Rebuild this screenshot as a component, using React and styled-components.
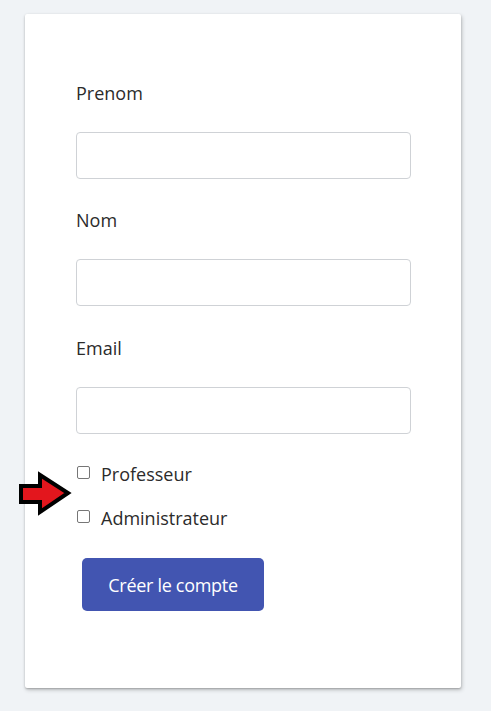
import React from "react";
import styled, { createGlobalStyle } from "styled-components";

const Global = createGlobalStyle`
  html, body { margin: 0; padding: 0; background: #f0f3f6; }
  body { font-family: "Open Sans", "Noto Sans", sans-serif; color: #2b2b2b; }
`;

const Page = styled.div`
  position: relative;
  padding: 14px 0 0 25px;
  min-height: 711px;
  box-sizing: border-box;
`;

const Card = styled.form`
  width: 436px;
  height: 674px;
  box-sizing: border-box;
  background: #fff;
  border-radius: 2px;
  box-shadow: 0 1px 2px rgba(0, 0, 0, 0.22), 1px 2px 4px rgba(0, 0, 0, 0.2);
  padding: 67px 50px 0 51px;
  display: flex;
  flex-direction: column;
`;

const Label = styled.label`
  display: block;
  font-size: 18px;
  line-height: 24px;
  margin-top: ${(p) => p.$top || 0}px;
  margin-bottom: 27px;
  color: #2b2b2b;
`;

const Input = styled.input`
  display: block;
  width: 335px;
  height: 47px;
  box-sizing: border-box;
  border: 1px solid #cfd2d6;
  border-radius: 4px;
  background: #fff;
  margin: 0;
`;

const CheckRow = styled.label`
  display: flex;
  align-items: center;
  height: 24px;
  font-size: 18px;
  margin-top: ${(p) => p.$top}px;
  color: #2b2b2b;
`;

const Box = styled.span`
  width: 11px;
  height: 11px;
  border: 1px solid #767676;
  border-radius: 2px;
  margin: -4px 11px 0 1px;
  flex: none;
`;

const Button = styled.button`
  margin: 28px 0 0 6px;
  width: 182px;
  height: 53px;
  border: none;
  border-radius: 5px;
  background: #4255b1;
  color: #fff;
  font-family: "Open Sans", "Noto Sans", sans-serif;
  font-size: 18px;
  letter-spacing: -0.3px;
  align-self: flex-start;
`;

const Arrow = styled.svg`
  position: absolute;
  left: 17px;
  top: 471px;
`;

export default function App() {
  return (
    <>
      <Global />
      <Page>
        <Card onSubmit={(e) => e.preventDefault()}>
          <Label>Prenom</Label>
          <Input />
          <Label $top={29}>Nom</Label>
          <Input />
          <Label $top={30}>Email</Label>
          <Input />
          <CheckRow $top={28}>
            <Box />
            Professeur
          </CheckRow>
          <CheckRow $top={20}>
            <Box />
            Administrateur
          </CheckRow>
          <Button type="button">Créer le compte</Button>
        </Card>
        <Arrow width="56" height="46" viewBox="0 0 56 46">
          <polygon
            points="4,15 23,15 23,4 51,22 23,41 23,31 4,31"
            fill="#e3161d"
            stroke="#000"
            strokeWidth="4"
            strokeLinejoin="miter"
          />
        </Arrow>
      </Page>
    </>
  );
}
